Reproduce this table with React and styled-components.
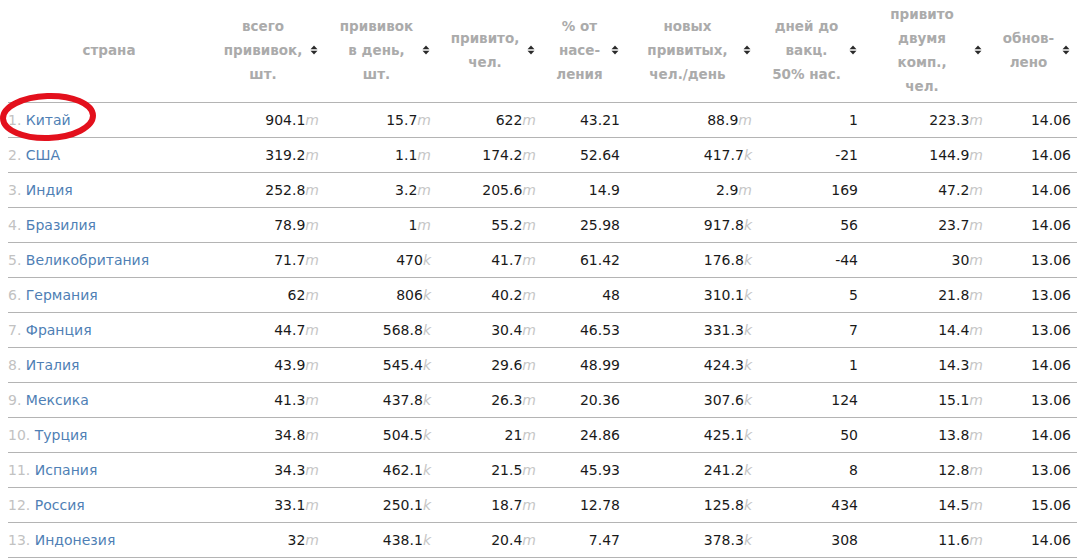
import React from "react";
import styled, { createGlobalStyle } from "styled-components";

const GlobalStyles = createGlobalStyle`
  html, body {
    margin: 0;
    padding: 0;
    background: #fff;
  }
  body {
    font-family: "DejaVu Sans", Verdana, sans-serif;
    font-size: 14px;
    color: #222;
  }
`;

const Page = styled.div`
  position: relative;
  padding: 0 6px 0 8px;
`;

const Table = styled.table`
  width: 1069px;
  table-layout: fixed;
  border-collapse: separate;
  border-spacing: 0;
`;

const HeadCell = styled.th`
  height: 96px;
  padding: 2px ${(p) => (p.$sortable ? "7px" : "0")} 4px 0;
  border-bottom: 1px solid #b4b4b4;
  font-size: 13.5px;
  font-weight: bold;
  line-height: 24px;
  color: #ababab;
  vertical-align: middle;
`;

const HeadInner = styled.div`
  display: flex;
  align-items: center;
`;

const HeadLabel = styled.div`
  flex: 1;
  text-align: center;
  padding-left: ${(p) => (p.$sortable ? "6px" : "0")};
`;

const Cell = styled.td`
  height: 34px;
  padding: 0 6px 0 0;
  border-bottom: 1px solid #b4b4b4;
  text-align: right;
  white-space: nowrap;
  color: #1a1a1a;
`;

const CountryCell = styled(Cell)`
  text-align: left;
  padding: 0;
`;

const Rank = styled.span`
  color: #c2c2c2;
`;

const CountryLink = styled.a`
  color: #4f7fb5;
  text-decoration: none;
`;

const Unit = styled.i`
  color: #c6c6c6;
`;

const Oval = styled.svg`
  position: absolute;
  left: 0;
  top: 90px;
  pointer-events: none;
`;

const SortIcon = () => (
  <svg width="8" height="10" viewBox="0 0 8 10" style={{ flex: "none" }}>
    <path d="M4 0.5 L7.5 4.2 L0.5 4.2 Z" fill="#2a2a2a" />
    <path d="M4 9.5 L7.5 5.8 L0.5 5.8 Z" fill="#2a2a2a" />
  </svg>
);

const columns = [
  { w: 202, lines: ["страна"] },
  { w: 115, lines: ["всего", "прививок,", "шт."], sort: true },
  { w: 112, lines: ["прививок", "в день,", "шт."], sort: true },
  { w: 105, lines: ["привито,", "чел."], sort: true },
  { w: 84, lines: ["% от", "насе-", "ления"], sort: true },
  { w: 132, lines: ["новых", "привитых,", "чел./день"], sort: true },
  { w: 106, lines: ["дней до", "вакц.", "50% нас."], sort: true },
  { w: 125, lines: ["привито", "двумя", "комп.,", "чел."], sort: true },
  { w: 88, lines: ["обнов-", "лено"], sort: true },
];

const rows = [
  ["Китай", "904.1m", "15.7m", "622m", "43.21", "88.9m", "1", "223.3m", "14.06"],
  ["США", "319.2m", "1.1m", "174.2m", "52.64", "417.7k", "-21", "144.9m", "14.06"],
  ["Индия", "252.8m", "3.2m", "205.6m", "14.9", "2.9m", "169", "47.2m", "14.06"],
  ["Бразилия", "78.9m", "1m", "55.2m", "25.98", "917.8k", "56", "23.7m", "14.06"],
  ["Великобритания", "71.7m", "470k", "41.7m", "61.42", "176.8k", "-44", "30m", "13.06"],
  ["Германия", "62m", "806k", "40.2m", "48", "310.1k", "5", "21.8m", "13.06"],
  ["Франция", "44.7m", "568.8k", "30.4m", "46.53", "331.3k", "7", "14.4m", "13.06"],
  ["Италия", "43.9m", "545.4k", "29.6m", "48.99", "424.3k", "1", "14.3m", "14.06"],
  ["Мексика", "41.3m", "437.8k", "26.3m", "20.36", "307.6k", "124", "15.1m", "13.06"],
  ["Турция", "34.8m", "504.5k", "21m", "24.86", "425.1k", "50", "13.8m", "14.06"],
  ["Испания", "34.3m", "462.1k", "21.5m", "45.93", "241.2k", "8", "12.8m", "13.06"],
  ["Россия", "33.1m", "250.1k", "18.7m", "12.78", "125.8k", "434", "14.5m", "15.06"],
  ["Индонезия", "32m", "438.1k", "20.4m", "7.47", "378.3k", "308", "11.6m", "14.06"],
];

// "904.1m" -> number + grey italic unit
function Value({ v }) {
  const m = v.match(/^(.*?)([mk])$/);
  if (!m) return v;
  return (
    <>
      {m[1]}
      <Unit>{m[2]}</Unit>
    </>
  );
}

export default function App() {
  return (
    <Page>
      <GlobalStyles />
      <Table>
        <colgroup>
          {columns.map((c, i) => (
            <col key={i} style={{ width: c.w }} />
          ))}
        </colgroup>
        <thead>
          <tr>
            {columns.map((c, i) => (
              <HeadCell key={i} $sortable={c.sort}>
                <HeadInner>
                  <HeadLabel $sortable={c.sort}>
                    {c.lines.map((l, j) => (
                      <div key={j}>{l}</div>
                    ))}
                  </HeadLabel>
                  {c.sort && <SortIcon />}
                </HeadInner>
              </HeadCell>
            ))}
          </tr>
        </thead>
        <tbody>
          {rows.map((r, i) => (
            <tr key={i}>
              <CountryCell>
                <Rank>{i + 1}. </Rank>
                <CountryLink href="#">{r[0]}</CountryLink>
              </CountryCell>
              {r.slice(1).map((v, j) => (
                <Cell key={j}>
                  <Value v={v} />
                </Cell>
              ))}
            </tr>
          ))}
        </tbody>
      </Table>
      <Oval width="100" height="56" viewBox="0 0 100 56">
        <ellipse
          cx="48"
          cy="27"
          rx="45"
          ry="21"
          fill="none"
          stroke="#e3101c"
          strokeWidth="6"
          transform="rotate(-2 48 27)"
        />
      </Oval>
    </Page>
  );
}
